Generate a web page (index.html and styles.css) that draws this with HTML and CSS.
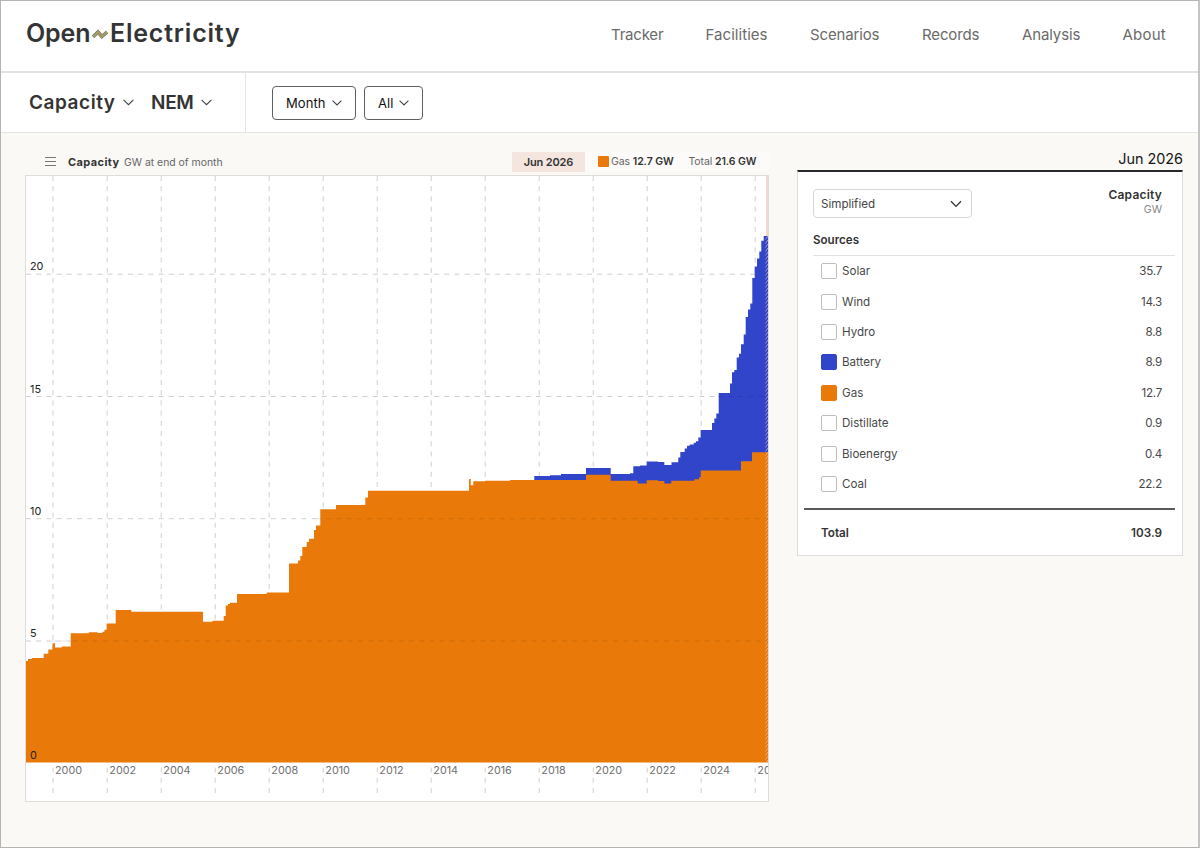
FILE: index.html
```html
<!DOCTYPE html>
<html lang="en">
<head>
<meta charset="utf-8">
<title>Open Electricity</title>
<link rel="stylesheet" href="styles.css">
</head>
<body>
<div class="page">
  <header class="header">
    <a class="logo"><span class="logo-open">Open</span><svg class="wave" width="16" height="11" viewBox="0 0 16 11"><path d="M1 7.8 6 3.1 9.8 7.5 15 3.1" fill="none" stroke="#6f7155" stroke-width="3.6"/><path d="M1 7.8 6 3.1 9.8 7.5 15 3.1" fill="none" stroke="#a39a6c" stroke-width="2.6"/></svg><span class="logo-elec">Electricity</span></a>
    <nav class="nav"><a class="nav-tracker">Tracker</a><a class="nav-facilities">Facilities</a><a class="nav-scenarios">Scenarios</a><a class="nav-records">Records</a><a class="nav-analysis">Analysis</a><a class="nav-about">About</a></nav>
  </header>
  <div class="toolbar">
    <div class="selectors">
      <span class="sel sel-cap">Capacity</span><svg class="chev" width="11" height="7" viewBox="0 0 11 7"><path d="M.6.8 5.5 5.7 10.4.8"/></svg>
      <span class="sel sel-nem">NEM</span><svg class="chev" width="11" height="7" viewBox="0 0 11 7"><path d="M.6.8 5.5 5.7 10.4.8"/></svg>
    </div>
    <div class="filters">
      <button class="btn btn-month"><span>Month</span><svg class="chev" width="10" height="6" viewBox="0 0 10 6"><path d="M.6.6 5 5 9.4.6"/></svg></button>
      <button class="btn btn-all"><span>All</span><svg class="chev" width="10" height="6" viewBox="0 0 10 6"><path d="M.6.6 5 5 9.4.6"/></svg></button>
    </div>
  </div>
  <main class="main">
    <section class="chart">
      <div class="chart-head">
        <svg class="burger" width="11" height="9" viewBox="0 0 11 9"><path d="M0 .5H11M0 4.5H11M0 8.5H11" stroke="#777" stroke-width="1"/></svg>
        <span class="title">Capacity</span><span class="unit">GW at end of month</span>
        <span class="date">Jun 2026</span>
        <span class="readout"><i class="swatch"></i><span class="gas">Gas <b>12.7 GW</b></span><span class="tot">Total <b>21.6 GW</b></span></span>
      </div>
      <div class="chart-box">
        <svg class="plot" width="742" height="625" viewBox="26 176 742 625">
          <defs><pattern id="hatch" width="3" height="4" patternUnits="userSpaceOnUse"><path d="M0 4 3 0" stroke="#eec2b4" stroke-width="1" opacity=".7"/></pattern></defs>
          <g class="vgrid"><path d="M53 176V795M107.2 176V795M161.2 176V795M215.2 176V795M269.2 176V795M323.2 176V795M377.2 176V795M431.2 176V795M485.2 176V795M539.2 176V795M593.2 176V795M647.2 176V795M701.2 176V795M755.2 176V795"/></g>
          <rect x="766" y="176" width="2" height="60" fill="#efd9d2"/>
          <g class="hgrid"><path d="M26 274.2H768M26 396.5H768M26 518.7H768M26 641H768"/></g>
          <path fill="#3145ca" d="M534.3 490V476H550V475.3H561V474H586V468H610.7V474H630V473.3H633.3V466.3H640V465.5H646.7V461.5H658V462H664.3V465H671.5V462.3H678.3V457.5H680.3V452H684.7V448.5H687V445.7H689.7V444.5H693.7V442.7H696V441.3H698.3V437.5H700.7V430H712V423H714.3V418.5H716.3V413.5H718.7V393H730V383.5H732V372.3H734.3V370H736.7V357.5H739V353.7H741V344.3H743.7V334.5H745.7V317H748V309.5H750.3V303.5H752.3V278H754.7V266.5H757V258.5H759.3V251.5H761.3V240.7H763.7V236H768V490Z"/>
          <path fill="#e97908" d="M26 762.5V661H28V659H32V658H43.7V653.7H48.3V649.5H52.5V643.2H55V647.5H61.7V646.5H70.7V633.3H88.7V632.3H97.7V633H102.3V631.7H104.5V629.7H106.7V623.5H115.7V610H131.3V611.7H203V621.7H212.5V620.7H223.7V616H225.7V605.5H228V604H230V602.7H237V594H266.7V592.5H289V563.4H298V560.5H300.3V556H302.3V547H306.7V542H309V538.7H314V530H316V525.5H320.3V509.3H336V505H365.3V497.5H368V490.7H469V479H470.7V485.3H473.3V481.3H485V480.7H510V480H586V474.7H610.7V480.7H637.7V483.5H646.7V480.3H658V481H664.3V483.5H671.3V480.7H694.3V479.3H699V477.3H700.7V470.5H741V461.3H752V452.2H768V762.5Z"/>
          <rect x="765.5" y="236" width="2.5" height="526.5" fill="url(#hatch)"/>
          <g class="hgrid over"><path d="M718 396.5H768M316 518.7H768M52 641H768"/></g>
          <g class="ylab"><text x="30" y="270">20</text><text x="30" y="393">15</text><text x="30" y="515">10</text><text x="30" y="637">5</text><text x="30" y="759">0</text></g>
          <g class="xlab"><text x="55" y="773.5">2000</text><text x="109.3" y="773.5">2002</text><text x="163.3" y="773.5">2004</text><text x="217.3" y="773.5">2006</text><text x="271.3" y="773.5">2008</text><text x="325.3" y="773.5">2010</text><text x="379.3" y="773.5">2012</text><text x="433.3" y="773.5">2014</text><text x="487.3" y="773.5">2016</text><text x="541.3" y="773.5">2018</text><text x="595.3" y="773.5">2020</text><text x="649.3" y="773.5">2022</text><text x="703.3" y="773.5">2024</text><text x="757.3" y="773.5">2026</text></g>
        </svg>
      </div>
    </section>
    <aside class="side">
      <div class="side-date">Jun 2026</div>
      <div class="card">
        <div class="card-top">
          <div class="select"><span>Simplified</span><svg class="chev dark" width="12" height="8" viewBox="0 0 12 8"><path d="M1 1.2 6 6.4 11 1.2"/></svg></div>
          <div class="colhead"><b>Capacity</b><span>GW</span></div>
        </div>
        <div class="sources">Sources</div>
        <ul class="list">
          <li><i></i><span>Solar</span><em>35.7</em></li>
          <li><i></i><span>Wind</span><em>14.3</em></li>
          <li><i></i><span>Hydro</span><em>8.8</em></li>
          <li><i class="battery"></i><span>Battery</span><em>8.9</em></li>
          <li><i class="gas-box"></i><span>Gas</span><em>12.7</em></li>
          <li><i></i><span>Distillate</span><em>0.9</em></li>
          <li><i></i><span>Bioenergy</span><em>0.4</em></li>
          <li><i></i><span>Coal</span><em>22.2</em></li>
        </ul>
        <div class="total"><span>Total</span><span>103.9</span></div>
      </div>
    </aside>
  </main>
</div>
</body>
</html>
```
FILE: styles.css
```css
* { box-sizing: border-box; }
body { margin: 0; font-family: Inter, "Liberation Sans", sans-serif; color: #333; }
.page { width: 1200px; height: 848px; background: #faf9f6; border: 1px solid #b4b4b4; border-right: 2px solid #c4c4c6; overflow: hidden; display: flex; flex-direction: column; }
.header { height: 72px; flex: none; background: #fff; border-bottom: 2px solid #e2e2e2; display: flex; justify-content: space-between; padding: 0 32px 0 25px; }
.logo { display: flex; align-items: center; height: 64px; font-size: 25px; font-weight: 600; color: #333435; line-height: 30px; }
.logo-open { letter-spacing: -.1px; width: 66px; }
.logo-elec { letter-spacing: .8px; margin-left: 2px; }
.wave { margin-top: 2px; }
.nav { display: flex; gap: 43px; font-size: 15px; line-height: 67px; color: #6a6a6a; }
.nav-tracker { width: 51.5px; letter-spacing: -.2px; }
.nav-facilities { width: 61.5px; letter-spacing: .05px; }
.nav-scenarios { width: 69px; letter-spacing: -.15px; }
.nav-records { width: 57px; letter-spacing: -.15px; }
.nav-analysis { width: 57.5px; letter-spacing: -.12px; }
.nav-about { width: 43.5px; letter-spacing: .2px; }
.toolbar { height: 60px; flex: none; background: #fff; border-bottom: 1px solid #e4e4e2; display: flex; }
.selectors { width: 245px; border-right: 1px solid #e4e4e2; padding-left: 28px; display: flex; align-items: center; }
.sel { font-size: 19px; font-weight: 600; color: #333; line-height: 60px; padding-top: 1px; }
.sel-cap { width: 94px; letter-spacing: .55px; }
.sel-nem { width: 50px; margin-left: 17px; letter-spacing: -.3px; }
.chev { flex: none; fill: none; stroke: #444; stroke-width: 1.1; }
.chev.dark { stroke: #333; stroke-width: 1.3; }
.filters { display: flex; align-items: center; gap: 8px; padding-left: 26px; }
.btn { height: 34px; background: #fff; border: 1px solid #606060; border-radius: 4px; font: 13px Inter, sans-serif; color: #111; display: flex; align-items: center; justify-content: space-between; padding: 0 13px; letter-spacing: .1px; }
.btn-month { width: 84px; }
.btn-all { width: 59px; }
.main { display: flex; flex: 1; padding: 19px 14px 0 24px; gap: 28px; }
.chart { width: 744px; }
.chart-head { height: 23px; display: flex; align-items: flex-start; font-size: 11px; line-height: 20px; color: #666; }
.burger { margin: 5px 12px 0 20px; }
.title { font-weight: 700; color: #333; width: 56px; letter-spacing: .4px; }
.unit { font-size: 10.4px; flex: 1; line-height: 21px; }
.date { width: 73px; background: #f4e5df; text-align: center; font-weight: 600; color: #333; letter-spacing: -.15px; }
.readout { display: flex; width: 184px; padding-left: 13px; background: #fcfbfa; font-size: 10.5px; letter-spacing: -.1px; }
.readout b { font-weight: 600; color: #333; }
.swatch { width: 11px; height: 11px; margin: 4px 2px 0 0; background: #e97908; border-radius: 1px; }
.gas { width: 77.5px; }
.chart-box { height: 627px; border: 1px solid #deddda; background: #fff; }
.plot { display: block; }
.vgrid path, .hgrid path { fill: none; stroke: #000; stroke-opacity: .19; stroke-width: 1; stroke-dasharray: 5 5.2; }
.hgrid.over path { stroke-opacity: .11; }
.ylab text { font-size: 10.8px; fill: #222; }
.xlab text { font-size: 10.8px; fill: #707070; }
.side { width: 386px; }
.side-date { height: 18px; text-align: right; font-size: 14.4px; line-height: 14px; color: #151515; }
.card { height: 386px; background: #fff; border: 1px solid #deddda; border-top: 2px solid #29292b; padding: 17px 7px 0 6px; }
.card-top { display: flex; justify-content: space-between; padding: 0 13px 0 9px; height: 43px; }
.select { width: 159px; height: 29px; border: 1px solid #d6d6d6; border-radius: 4px; display: flex; align-items: center; justify-content: space-between; padding: 0 9px 0 7px; font-size: 11.6px; color: #444; }
.colhead { text-align: right; font-size: 12px; line-height: 12px; }
.colhead b { display: block; font-weight: 600; letter-spacing: .2px; }
.colhead span { font-size: 10.5px; line-height: 18px; color: #888; display: block; }
.sources { height: 24px; margin-left: 9px; font-size: 11.6px; font-weight: 600; line-height: 16px; border-bottom: 1px solid #e2e2e2; }
.list { margin: 0; padding: 0 13px 0 17px; list-style: none; font-size: 11.6px; height: 253.5px; border-bottom: 2px solid #5a5a5a; }
.list li { height: 30.4px; display: flex; align-items: center; color: #484848; }
.list i { width: 16px; height: 16px; border: 1px solid #bdbdbd; border-radius: 2px; margin-right: 5px; }
.list em { font-style: normal; margin-left: auto; letter-spacing: -.25px; }
.list .battery { background: #3145ca; border-color: #3145ca; }
.list .gas-box { background: #e97908; border-color: #e97908; }
.total { display: flex; justify-content: space-between; padding: 0 13px 0 17px; font-size: 11.7px; line-height: 47px; font-weight: 600; }
```
